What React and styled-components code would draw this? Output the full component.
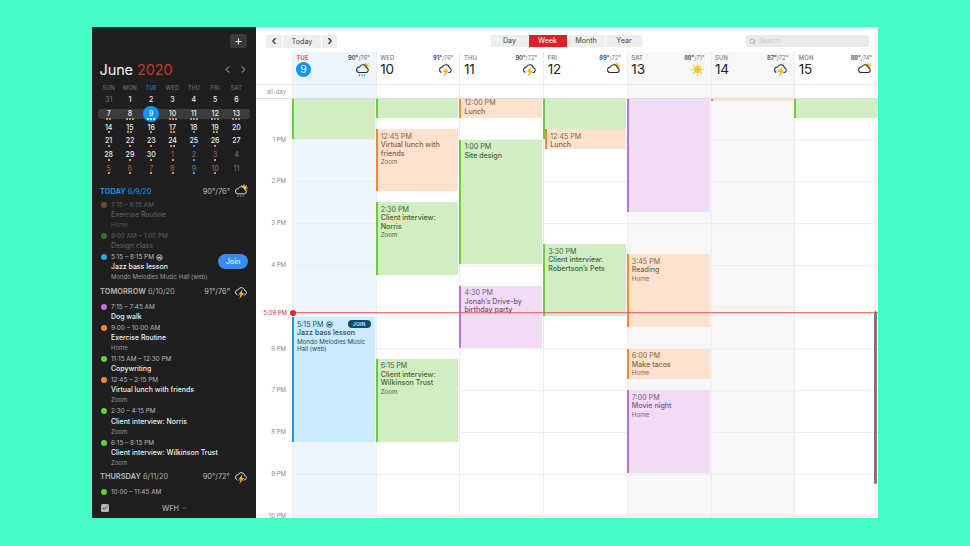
import React from 'react';
import styled, { createGlobalStyle } from 'styled-components';
import { ChevronLeft, ChevronRight, ChevronDown, Plus, Search, Check } from 'lucide-react';

const HOUR = 41.8;
const hourTop = (h) => (h - 12) * HOUR - 1.3;

const GlobalStyle = createGlobalStyle`
  html, body { margin: 0; padding: 0; background: #45fdc6; }
  * { box-sizing: border-box; }
  body { font-family: Inter, "Liberation Sans", sans-serif; }
`;

const Page = styled.div`
  width: 970px;
  height: 546px;
  padding: 27px 92px 28px;
  overflow: hidden;
`;

const Window = styled.div`
  display: flex;
  width: 786px;
  height: 491px;
  background: #fff;
`;

/* ---------- sidebar ---------- */

const Sidebar = styled.aside`
  display: flex;
  flex-direction: column;
  width: 164px;
  flex: none;
  background: #1f1f1f;
  color: #eee;
  position: relative;
`;

const SideTop = styled.div`
  display: flex;
  justify-content: flex-end;
  padding: 7px 9px 0 0;
`;

const AddButton = styled.button`
  display: flex;
  align-items: center;
  justify-content: center;
  width: 17px;
  height: 14px;
  padding: 0;
  border: 0;
  border-radius: 2px;
  background: #3a3a3a;
  color: #fff;
`;

const MonthRow = styled.div`
  display: flex;
  align-items: center;
  height: 20px;
  margin-top: 11px;
  padding: 0 7px 0 7.5px;
`;

const MonthTitle = styled.div`
  flex: 1;
  font-size: 14.5px;
  letter-spacing: -0.1px;
  color: #f4f4f4;
  span { color: #c8352f; }
`;

const MonthNav = styled.div`
  display: flex;
  gap: 5px;
  color: #ccc;
`;

const MiniCal = styled.div`
  margin-left: 6px;
  width: 152px;
`;

const MiniHead = styled.div`
  display: grid;
  grid-template-columns: repeat(7, 21.3px);
  height: 10px;
  margin-top: 4px;
  font-size: 5.5px;
  line-height: 10px;
  letter-spacing: 0.2px;
  text-align: center;
  color: #666;
`;

const HeadDay = styled.span`
  color: ${(p) => (p.$today ? '#1a7fc8' : '#6c6c6c')};
  font-weight: 500;
`;

const MiniWeek = styled.div`
  position: relative;
  display: grid;
  grid-template-columns: repeat(7, 21.3px);
  height: 13.7px;
  &::before {
    content: '';
    display: ${(p) => (p.$selected ? 'block' : 'none')};
    position: absolute;
    inset: 2px 0 1px 0;
    border-radius: 2px;
    background: #3b3b3b;
  }
`;

const MiniDay = styled.div`
  position: relative;
  padding-top: 2.3px;
  text-align: center;
  font-size: 7px;
  font-weight: 500;
  line-height: 9px;
  color: ${(p) => (p.$muted ? '#6a6a6a' : '#ededed')};
  &::before {
    content: '';
    display: ${(p) => (p.$today ? 'block' : 'none')};
    position: absolute;
    left: 2.6px;
    top: -1px;
    width: 16px;
    height: 16px;
    border-radius: 50%;
    background: #0c97f7;
  }
`;

const MiniNum = styled.div`
  position: relative;
`;

const MiniDots = styled.div`
  position: relative;
  display: flex;
  justify-content: center;
  gap: 1px;
  height: 2px;
  margin-top: -0.3px;
`;

const MiniDot = styled.i`
  display: block;
  width: 2px;
  height: 2px;
  background: ${(p) => p.$c};
`;

const Agenda = styled.div`
  flex: 1;
  min-height: 0;
  overflow: hidden;
  padding: 11px 8px 0;
`;

const SectionHead = styled.div`
  display: flex;
  align-items: center;
  height: 10px;
  margin: ${(p) => (p.$first ? '0 0 4px' : '4px 0 5.5px')};
  font-size: 7.4px;
  color: ${(p) => (p.$today ? '#1a8fe3' : '#a8a8a8')};
  b { font-weight: 700; }
`;

const SectionDate = styled.span`
  flex: 1;
  white-space: nowrap;
`;

const SectionTemp = styled.span`
  color: #bdbdbd;
  margin-right: 4px;
`;

const AgendaItem = styled.div`
  position: relative;
  padding-left: 11px;
  margin-bottom: 1px;
  font-size: 6.4px;
  line-height: 10.05px;
  white-space: nowrap;
  color: ${(p) => (p.$dim ? '#5f5f5f' : '#b8b8b8')};
`;

const AgendaDot = styled.i`
  position: absolute;
  left: 1px;
  top: 2px;
  width: 6px;
  height: 6px;
  border-radius: 50%;
  background: ${(p) => p.$c};
`;

const AgendaTime = styled.div`
  display: flex;
  align-items: center;
  gap: 2px;
`;

const AgendaTitle = styled.div`
  font-size: 6.95px;
  font-weight: 500;
  color: ${(p) => (p.$dim ? '#5c5c5c' : '#f0f0f0')};
`;

const AgendaSub = styled.div`
  font-size: 6px;
  color: ${(p) => (p.$dim ? '#555' : '#999')};
`;

const JoinButton = styled.div`
  position: absolute;
  right: 0;
  top: 2px;
  width: 30px;
  height: 15px;
  border-radius: 8px;
  background: #3a8bf0;
  color: #e4eefc;
  font-size: 7.2px;
  font-weight: 500;
  line-height: 15px;
  text-align: center;
`;

const SideFoot = styled.div`
  display: flex;
  align-items: center;
  height: 20px;
  flex: none;
  padding: 0 0 0 9px;
  background: #1f1f1f;
  color: #a9a9a9;
`;

const CheckBox = styled.span`
  display: flex;
  align-items: center;
  justify-content: center;
  width: 8px;
  height: 8px;
  border-radius: 1.5px;
  background: #b5b5b5;
  color: #222;
`;

const FootLabel = styled.span`
  display: flex;
  align-items: center;
  gap: 2px;
  margin-left: 53px;
  font-size: 7.2px;
  font-weight: 500;
`;

/* ---------- main ---------- */

const Main = styled.main`
  position: relative;
  display: flex;
  flex-direction: column;
  flex: 1;
  min-width: 0;
  overflow: hidden;
`;

const Toolbar = styled.div`
  display: flex;
  align-items: center;
  height: 25px;
  padding: 8px 9px 5px 10px;
`;

const NavGroup = styled.div`
  display: flex;
  gap: 1px;
  width: 71px;
  height: 13px;
`;

const NavCell = styled.div`
  display: flex;
  align-items: center;
  justify-content: center;
  width: ${(p) => p.$w}px;
  background: #eeeeee;
  color: #222;
  font-size: 7.2px;
  span { color: #444; }
`;

const Segments = styled.div`
  display: flex;
  margin-left: 154px;
  height: 12px;
`;

const Segment = styled.div`
  width: ${(p) => p.$w}px;
  font-size: 7.2px;
  line-height: 12px;
  text-align: center;
  border-right: 1px solid ${(p) => (p.$active ? '#e21f26' : '#fafafa')};
  background: ${(p) => (p.$active ? '#e21f26' : '#eeeeee')};
  color: ${(p) => (p.$active ? '#fff' : '#444')};
`;

const SearchBox = styled.div`
  display: flex;
  align-items: center;
  gap: 3px;
  width: 123px;
  height: 12px;
  margin-left: auto;
  padding-left: 3px;
  border-radius: 2px;
  background: #eaeaea;
  color: #8d8d8d;
  font-size: 6.4px;
  span { color: #c4c4c4; }
`;

const Columns = styled.div`
  display: grid;
  grid-template-columns: 36px repeat(7, 1fr);
`;

const DayHead = styled.div`
  display: grid;
  grid-template-columns: 1fr auto;
  grid-template-rows: 9px 14px;
  align-items: center;
  height: 32px;
  padding: 1px 6px 0 3.5px;
  border-left: 1px solid #ededed;
  background: ${(p) => (p.$today ? '#eef6fd' : p.$weekend ? '#f7f7f7' : '#fff')};
`;

const HeadName = styled.span`
  font-size: 5.8px;
  font-weight: 500;
  letter-spacing: 0.2px;
  color: ${(p) => (p.$today ? '#e2242b' : '#777')};
`;

const HeadTemp = styled.span`
  font-size: 5.8px;
  color: #777;
  b { font-weight: 600; color: #444; }
`;

const HeadNum = styled.span`
  font-size: 13.5px;
  letter-spacing: -0.2px;
  color: #222;
`;

const TodayNum = styled.span`
  display: flex;
  align-items: center;
  justify-content: center;
  width: 15px;
  height: 15px;
  margin-left: -0.5px;
  border-radius: 50%;
  background: #0c97f7;
  color: #fff;
  font-size: 10.5px;
`;

const HeadIcon = styled.span`
  display: flex;
  justify-content: flex-end;
`;

const AllDayRow = styled(Columns)`
  height: 15px;
  border-top: 1px solid #e8e8e8;
  border-bottom: 1px solid #dcdcdc;
`;

const AllDayLabel = styled.div`
  padding-right: 6px;
  font-size: 6px;
  line-height: 13px;
  text-align: right;
  color: #999;
`;

const AllDayCell = styled.div`
  border-left: 1px solid #ededed;
  background: ${(p) => (p.$today ? '#eef6fd' : p.$weekend ? '#f7f7f7' : '#fff')};
`;

const Body = styled(Columns)`
  position: relative;
  flex: 1;
  min-height: 0;
  overflow: hidden;
`;

const Gutter = styled.div`
  padding-top: 19.6px;
`;

const HourLabel = styled.div`
  height: ${HOUR}px;
  padding-right: 6px;
  font-size: 6px;
  line-height: ${HOUR}px;
  text-align: right;
  color: #888;
`;

const DayColumn = styled.div`
  position: relative;
  border-left: 1px solid #ededed;
  background-color: ${(p) => (p.$today ? '#eef6fd' : p.$weekend ? '#f7f7f7' : '#fff')};
  background-image: linear-gradient(${(p) => (p.$today ? '#e3edf6' : '#ececec')} 1px, transparent 1px);
  background-size: 100% ${HOUR}px;
  background-position: 0 ${HOUR - 1.3}px;
`;

const palette = {
  green: { bg: '#d2edc4', bar: '#6ccb3f', text: '#3e6633' },
  orange: { bg: '#fde3cf', bar: '#ee8a3c', text: '#8a5f3e' },
  purple: { bg: '#f1dcf6', bar: '#b974cc', text: '#75577e' },
  blue: { bg: '#cdeafe', bar: '#1a97e6', text: '#1d4a70' },
};

const EventCard = styled.div.attrs((p) => ({
  style: {
    top: hourTop(p.$start),
    height: (p.$end - p.$start) * HOUR - 0.8,
    left: (p.$indent || 0) - 1,
  },
}))`
  position: absolute;
  right: 1px;
  overflow: hidden;
  padding: 3.5px 2px 0 3px;
  border-left: 2px solid ${(p) => palette[p.$tone].bar};
  background: ${(p) => palette[p.$tone].bg};
  color: ${(p) => palette[p.$tone].text};
  font-size: 7.1px;
  line-height: 8.5px;
`;

const EventTime = styled.div`
  display: flex;
  align-items: center;
  gap: 2px;
`;

const EventTitle = styled.div`
  font-weight: 500;
`;

const EventSub = styled.div`
  font-size: 6.2px;
  line-height: 7.6px;
`;

const JoinPill = styled.span`
  position: absolute;
  right: 4px;
  top: 2.5px;
  width: 23px;
  height: 8px;
  border-radius: 4px;
  background: #114c78;
  color: #d5e9f8;
  font-size: 5px;
  font-weight: 600;
  line-height: 8px;
  letter-spacing: 0.2px;
  text-align: center;
`;

const NowLine = styled.div`
  position: absolute;
  left: 36px;
  right: 0;
  top: ${(p) => p.$top}px;
  height: 1px;
  background: rgba(240, 70, 70, 0.75);
  box-shadow: 0 1px 0 rgba(245, 130, 130, 0.3);
  &::before {
    content: '';
    position: absolute;
    left: -2.5px;
    top: -2.5px;
    width: 6px;
    height: 6px;
    border-radius: 50%;
    background: #e4262c;
  }
`;

const NowLabel = styled.span`
  position: absolute;
  right: calc(100% + 5px);
  top: -4px;
  font-size: 6px;
  line-height: 9px;
  white-space: nowrap;
  color: #e4262c;
`;

const ScrollThumb = styled.div`
  position: absolute;
  right: 1.5px;
  top: 212px;
  width: 3px;
  height: 173px;
  border-radius: 2px;
  background: #7d7874;
`;

/* ---------- drawings ---------- */

const cloudPath = 'M5.6 15.5h10.6a3.5 3.5 0 0 0 .5-6.9 5.2 5.2 0 0 0-10-1.2 4.1 4.1 0 0 0-1.1 8.1z';

const Weather = ({ kind, stroke = '#2a2a2a', cut = '#fff', size = 15 }) => (
  <svg width={size} height={size} viewBox="0 0 22 22" fill="none">
    {kind === 'sun' ? (
      <g stroke="#f6c531" strokeWidth="1.6" strokeLinecap="round">
        <circle cx="11" cy="11" r="4.4" fill="#f6c531" />
        <path d="M11 2.5v2M11 17.5v2M2.5 11h2M17.5 11h2M5 5l1.4 1.4M15.6 15.6 17 17M5 17l1.4-1.4M15.6 6.4 17 5" />
      </g>
    ) : null}
    {kind === 'partly' || kind === 'rain' ? (
      <g stroke="#f6c531" strokeWidth="1.2" strokeLinecap="round">
        <circle cx="16" cy="6" r="3.4" fill="#f6c531" />
        <path d="M16 .6v.8M21.4 6h-.8M20 2l-.6.6M20 10l-.6-.6M12 2l.6.6" />
      </g>
    ) : null}
    {kind !== 'sun' ? <path d={cloudPath} fill={kind === 'bolt' ? 'none' : cut} stroke={stroke} strokeWidth="1.5" /> : null}
    {kind === 'bolt' ? (
      <path
        d="M13.4 6.5 6.8 14.8h3.6L8.4 22l7.6-9.6h-3.8z"
        fill="#f2b61c"
        stroke={cut}
        strokeWidth="2.4"
        style={{ paintOrder: 'stroke' }}
      />
    ) : null}
    {kind === 'rain' ? (
      <path d="M6.5 18.5v1.6M10.5 18.5v1.6M14.5 18.5v1.6" stroke="#2a93e0" strokeWidth="1.6" strokeLinecap="round" />
    ) : null}
  </svg>
);

const VideoBadge = ({ color }) => (
  <svg width="7" height="7" viewBox="0 0 8 8" fill="none">
    <circle cx="4" cy="4" r="3.2" stroke={color} strokeWidth="1" />
    <rect x="2" y="3" width="4" height="2" rx="0.5" fill={color} />
  </svg>
);

/* ---------- data ---------- */

const o = '#ee8a3c';
const g = '#62c83a';
const b = '#2a9be8';
const p = '#b56fd0';
const w = '#ffffff';

const miniWeeks = [
  [['31', [], 1], ['1', []], ['2', []], ['3', []], ['4', []], ['5', []], ['6', []]],
  [['7', [o, p]], ['8', [o, g, g]], ['9', [w, w, w]], ['10', [o, o, g]], ['11', [g, g, g]], ['12', [o, b, g]], ['13', [p, o, p]]],
  [['14', [o]], ['15', [o, g]], ['16', [o]], ['17', [o, o]], ['18', [b]], ['19', [g, g]], ['20', []]],
  [['21', [o]], ['22', [o]], ['23', [o]], ['24', [o, o]], ['25', [b]], ['26', [o]], ['27', []]],
  [['28', [o]], ['29', [o]], ['30', [o]], ['1', [o], 1], ['2', [b], 1], ['3', [o], 1], ['4', [], 1]],
  [['5', [o], 1], ['6', [o], 1], ['7', [o], 1], ['8', [o], 1], ['9', [b], 1], ['10', [o], 1], ['11', [], 1]],
];

const miniHead = ['SUN', 'MON', 'TUE', 'WED', 'THU', 'FRI', 'SAT'];

const agenda = [
  {
    head: ['TODAY', '6/9/20'], temp: '90°/76°', icon: 'rain', today: true,
    items: [
      { c: '#6b4a31', time: '7:15 – 8:15 AM', title: 'Exercise Routine', sub: 'Home', dim: true },
      { c: '#3e6a31', time: '9:00 AM – 1:00 PM', title: 'Design class', dim: true },
      { c: '#26a8f4', time: '5:15 – 8:15 PM', title: 'Jazz bass lesson', sub: 'Mondo Melodies Music Hall (web)', video: true, join: true },
    ],
  },
  {
    head: ['TOMORROW', '6/10/20'], temp: '91°/76°', icon: 'bolt',
    items: [
      { c: '#c56fdc', time: '7:15 – 7:45 AM', title: 'Dog walk' },
      { c: '#f58a35', time: '9:00 – 10:00 AM', title: 'Exercise Routine', sub: 'Home' },
      { c: '#5fd23a', time: '11:15 AM – 12:30 PM', title: 'Copywriting' },
      { c: '#f58a35', time: '12:45 – 2:15 PM', title: 'Virtual lunch with friends', sub: 'Zoom' },
      { c: '#5fd23a', time: '2:30 – 4:15 PM', title: 'Client interview: Norris', sub: 'Zoom' },
      { c: '#5fd23a', time: '6:15 – 8:15 PM', title: 'Client interview: Wilkinson Trust', sub: 'Zoom' },
    ],
  },
  {
    head: ['THURSDAY', '6/11/20'], temp: '90°/72°', icon: 'bolt',
    items: [{ c: '#5fd23a', time: '10:00 – 11:45 AM' }],
  },
];

const days = [
  { name: 'TUE', num: '9', hi: '90°', lo: '/76°', icon: 'rain', today: true },
  { name: 'WED', num: '10', hi: '91°', lo: '/76°', icon: 'bolt' },
  { name: 'THU', num: '11', hi: '90°', lo: '/72°', icon: 'bolt' },
  { name: 'FRI', num: '12', hi: '89°', lo: '/72°', icon: 'partly' },
  { name: 'SAT', num: '13', hi: '88°', lo: '/71°', icon: 'sun', weekend: true },
  { name: 'SUN', num: '14', hi: '87°', lo: '/72°', icon: 'bolt', weekend: true },
  { name: 'MON', num: '15', hi: '88°', lo: '/74°', icon: 'partly' },
];

const events = [
  [
    { tone: 'green', start: 11, end: 13 },
    { tone: 'blue', start: 17.25, end: 20.25, time: '5:15 PM', title: 'Jazz bass lesson', sub: 'Mondo Melodies Music Hall (web)', join: true },
  ],
  [
    { tone: 'green', start: 11, end: 12.5 },
    { tone: 'orange', start: 12.75, end: 14.25, time: '12:45 PM', title: 'Virtual lunch with friends', sub: 'Zoom' },
    { tone: 'green', start: 14.5, end: 16.25, time: '2:30 PM', title: 'Client interview: Norris', sub: 'Zoom' },
    { tone: 'green', start: 18.25, end: 20.25, time: '6:15 PM', title: 'Client interview: Wilkinson Trust', sub: 'Zoom' },
  ],
  [
    { tone: 'orange', start: 11.95, end: 12.5, time: '12:00 PM', title: 'Lunch' },
    { tone: 'green', start: 13, end: 16, time: '1:00 PM', title: 'Site design' },
    { tone: 'purple', start: 16.5, end: 18, time: '4:30 PM', title: 'Jonah’s Drive-by birthday party' },
  ],
  [
    { tone: 'green', start: 11, end: 13 },
    { tone: 'orange', start: 12.75, end: 13.25, time: '12:45 PM', title: 'Lunch', indent: 2 },
    { tone: 'green', start: 15.5, end: 17.25, time: '3:30 PM', title: 'Client interview: Robertson’s Pets' },
  ],
  [
    { tone: 'purple', start: 11, end: 14.75 },
    { tone: 'orange', start: 15.75, end: 17.5, time: '3:45 PM', title: 'Reading', sub: 'Home' },
    { tone: 'orange', start: 18, end: 18.75, time: '6:00 PM', title: 'Make tacos', sub: 'Home' },
    { tone: 'purple', start: 19, end: 21, time: '7:00 PM', title: 'Movie night', sub: 'Home' },
  ],
  [{ tone: 'orange', start: 11, end: 12.1 }],
  [{ tone: 'green', start: 11, end: 12.5 }],
];

const hours = ['1 PM', '2 PM', '3 PM', '4 PM', '', '6 PM', '7 PM', '8 PM', '9 PM', '10 PM'];

const segments = [
  { label: 'Day', w: 38 },
  { label: 'Week', w: 38, active: true },
  { label: 'Month', w: 39 },
  { label: 'Year', w: 37 },
];

const MiniCalendar = () => (
  <MiniCal>
    <MiniHead>
      {miniHead.map((d) => <HeadDay key={d} $today={d === 'TUE'}>{d}</HeadDay>)}
    </MiniHead>
    {miniWeeks.map((week, i) => (
      <MiniWeek key={i} $selected={i === 1}>
        {week.map(([num, dots, muted], j) => (
          <MiniDay key={j} $muted={!!muted} $today={i === 1 && j === 2}>
            <MiniNum>{num}</MiniNum>
            <MiniDots>
              {dots.map((c, k) => <MiniDot key={k} $c={c} />)}
            </MiniDots>
          </MiniDay>
        ))}
      </MiniWeek>
    ))}
  </MiniCal>
);

const AgendaList = () => (
  <Agenda>
    {agenda.map((section, i) => (
      <div key={section.head[0]}>
        <SectionHead $first={i === 0} $today={section.today}>
          <SectionDate><b>{section.head[0]}</b> {section.head[1]}</SectionDate>
          <SectionTemp>{section.temp}</SectionTemp>
          <Weather kind={section.icon} stroke="#e8e8e8" cut="#1f1f1f" size={14} />
        </SectionHead>
        {section.items.map((item) => (
          <AgendaItem key={item.time} $dim={item.dim}>
            <AgendaDot $c={item.c} />
            <AgendaTime>{item.time}{item.video ? <VideoBadge color="#c8c8c8" /> : null}</AgendaTime>
            {item.title ? <AgendaTitle $dim={item.dim}>{item.title}</AgendaTitle> : null}
            {item.sub ? <AgendaSub $dim={item.dim}>{item.sub}</AgendaSub> : null}
            {item.join ? <JoinButton>Join</JoinButton> : null}
          </AgendaItem>
        ))}
      </div>
    ))}
  </Agenda>
);

const App = () => (
  <Page>
    <GlobalStyle />
    <Window>
      <Sidebar>
        <SideTop>
          <AddButton><Plus size={9} strokeWidth={2.5} /></AddButton>
        </SideTop>
        <MonthRow>
          <MonthTitle>June <span>2020</span></MonthTitle>
          <MonthNav>
            <ChevronLeft size={11} strokeWidth={2} />
            <ChevronRight size={11} strokeWidth={2} />
          </MonthNav>
        </MonthRow>
        <MiniCalendar />
        <AgendaList />
        <SideFoot>
          <CheckBox><Check size={6} strokeWidth={3} /></CheckBox>
          <FootLabel>WFH <ChevronDown size={6} strokeWidth={2} /></FootLabel>
        </SideFoot>
      </Sidebar>
      <Main>
        <Toolbar>
          <NavGroup>
            <NavCell $w={16}><ChevronLeft size={10} strokeWidth={2.6} /></NavCell>
            <NavCell $w={38}><span>Today</span></NavCell>
            <NavCell $w={15}><ChevronRight size={10} strokeWidth={2.6} /></NavCell>
          </NavGroup>
          <Segments>
            {segments.map((s) => (
              <Segment key={s.label} $w={s.w} $active={s.active}>{s.label}</Segment>
            ))}
          </Segments>
          <SearchBox>
            <Search size={7} strokeWidth={2} />
            <span>Search</span>
          </SearchBox>
        </Toolbar>
        <Columns>
          <div />
          {days.map((d) => (
            <DayHead key={d.name} $today={d.today} $weekend={d.weekend}>
              <HeadName $today={d.today}>{d.name}</HeadName>
              <HeadTemp><b>{d.hi}</b>{d.lo}</HeadTemp>
              {d.today ? <TodayNum>{d.num}</TodayNum> : <HeadNum>{d.num}</HeadNum>}
              <HeadIcon><Weather kind={d.icon} cut={d.today ? '#eef6fd' : d.weekend ? '#f7f7f7' : '#fff'} /></HeadIcon>
            </DayHead>
          ))}
        </Columns>
        <AllDayRow>
          <AllDayLabel>all-day</AllDayLabel>
          {days.map((d) => <AllDayCell key={d.name} $today={d.today} $weekend={d.weekend} />)}
        </AllDayRow>
        <Body>
          <Gutter>
            {hours.map((h, i) => <HourLabel key={i}>{h}</HourLabel>)}
          </Gutter>
          {days.map((d, i) => (
            <DayColumn key={d.name} $today={d.today} $weekend={d.weekend}>
              {events[i].map((ev) => (
                <EventCard key={ev.start} $tone={ev.tone} $start={ev.start} $end={ev.end} $indent={ev.indent}>
                  {ev.time ? (
                    <EventTime>
                      {ev.time}
                      {ev.join ? <VideoBadge color={palette.blue.text} /> : null}
                    </EventTime>
                  ) : null}
                  {ev.title ? <EventTitle>{ev.title}</EventTitle> : null}
                  {ev.sub ? <EventSub>{ev.sub}</EventSub> : null}
                  {ev.join ? <JoinPill>JOIN</JoinPill> : null}
                </EventCard>
              ))}
            </DayColumn>
          ))}
          <NowLine $top={213}>
            <NowLabel>5:09 PM</NowLabel>
          </NowLine>
          <ScrollThumb />
        </Body>
      </Main>
    </Window>
  </Page>
);

export default App;
